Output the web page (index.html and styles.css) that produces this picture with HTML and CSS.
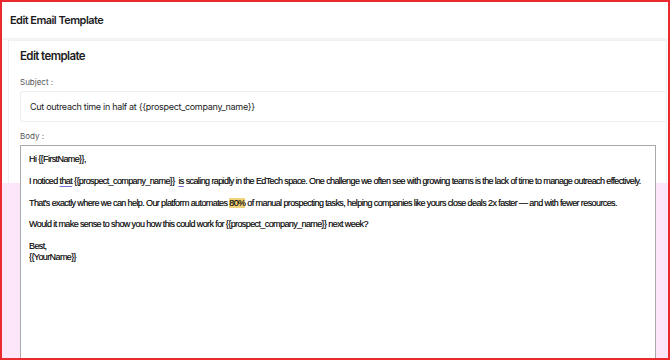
FILE: index.html
```html
<!DOCTYPE html>
<html lang="en">
<head>
  <meta charset="UTF-8" />
  <title>Edit Email Template</title>
  <link rel="stylesheet" href="styles.css">
</head>
<body>
  <div class="frame">
    <header class="title-bar">Edit Email Template</header>

    <div class="card">
      <h2>Edit template</h2>

      <label class="field-label">Subject :</label>
      <div class="subject">Cut outreach time in half at {{prospect_company_name}}</div>

      <label class="field-label">Body :</label>
      <div class="editor">
        <p>Hi {{FirstName}},</p>
        <p>I noticed <span class="spell">that</span> {{prospect_company_name}}&nbsp; <span class="spell">is</span> scaling rapidly in the EdTech space. One challenge we often see with growing teams is the lack of time to manage outreach effectively.</p>
        <p>That’s exactly where we can help. Our platform automates <span class="mark">80%</span> of manual prospecting tasks, helping companies like yours close deals 2x faster — and with fewer resources.</p>
        <p>Would it make sense to show you how this could work for {{prospect_company_name}} next week?</p>
        <p>Best,<br>{{YourName}}</p>
      </div>
    </div>

    <div class="focus-box"></div>
  </div>
</body>
</html>
```

FILE: styles.css
```css
body {
  margin: 0;
  font-family: 'Inter', 'Noto Sans', sans-serif;
  color: #1c1c1e;
  background: #fff;
}

.frame {
  position: relative;
  width: 670px;
  height: 360px;
  box-sizing: border-box;
  border: 2px solid #ea2a2e;
  overflow: hidden;
}

.title-bar {
  height: 36px;
  padding: 0 8px;
  display: flex;
  align-items: center;
  font-size: 11px;
  font-weight: 600;
  letter-spacing: -0.55px;
  border-bottom: 2px solid #f4f4f4;
}

.card {
  margin: 0 1px 0 6px;
  padding: 8px 0 0 11px;
  border: 1px solid #f0f0f0;
  border-bottom: none;
}

.card h2 {
  margin: 0 0 14px;
  font-size: 11.5px;
  font-weight: 600;
  letter-spacing: -0.6px;
}

.field-label {
  display: block;
  font-size: 8px;
  line-height: 10px;
  color: #555;
  margin-bottom: 4px;
}

.subject {
  height: 29px;
  padding: 0 9px;
  display: flex;
  align-items: center;
  font-size: 9px;
  letter-spacing: -0.3px;
  border: 1px solid #eee;
  border-right: none;
  border-radius: 3px 0 0 3px;
  margin-bottom: 9px;
}

.editor {
  position: relative;
  z-index: 2;
  height: 230px;
  margin-right: 10px;
  padding: 8px 8px;
  background: #fff;
  border: 1px solid #a9a9a9;
  border-bottom: none;
  font-family: 'Liberation Sans', Arial, sans-serif;
  font-size: 9px;
  letter-spacing: -0.6px;
  line-height: 11px;
  color: #000;
  -webkit-text-stroke: 0.15px #000;
  white-space: nowrap;
}

.editor p {
  margin: 0 0 10.8px;
}

.spell {
  text-decoration: underline;
  text-decoration-color: #7070d8;
  text-underline-offset: 2px;
}

.mark {
  background: #f0d27c;
}

.focus-box {
  position: absolute;
  left: -2px;
  right: -2px;
  top: 181px;
  bottom: -2px;
  z-index: 1;
  background: #fde6f9;
  border: 2px solid #8a5a22;
  border-top: none;
}
```
